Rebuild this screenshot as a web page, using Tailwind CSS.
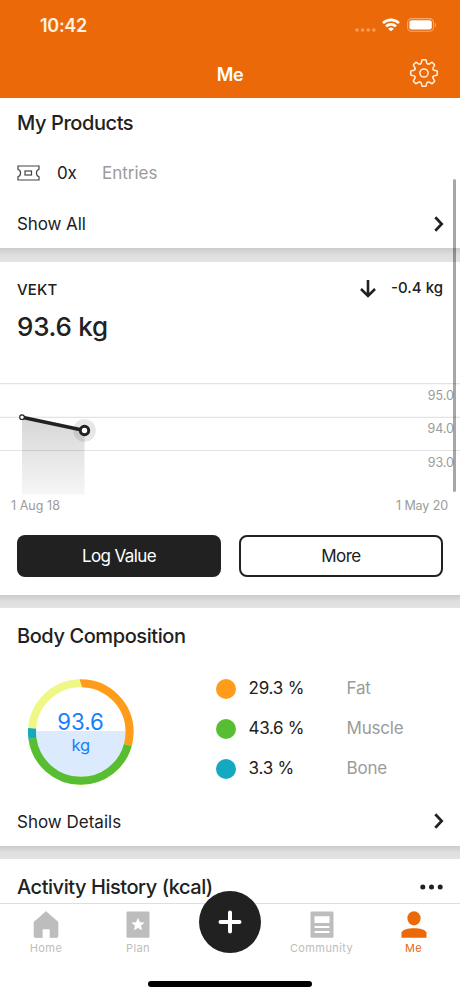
<!DOCTYPE html>
<html lang="en">
<head>
<meta charset="utf-8">
<title>Me</title>
<script src="https://cdn.jsdelivr.net/npm/@tailwindcss/browser@4"></script>
</head>
<body class="bg-white">
<div class="relative w-[460px] h-[996px] overflow-hidden bg-[#e3e3e3] text-[#212121] font-['Inter','Liberation_Sans',sans-serif] whitespace-nowrap flex flex-col">

  <header class="h-[98px] shrink-0 bg-[#ec6909] text-white">
    <div class="h-[50px] pl-[40px] pr-[23px] flex items-center justify-between">
      <span class="text-[18px] leading-[22px] font-semibold tracking-[-0.3px] text-[#fff3e0] pt-[2px]">10:42</span>
      <div class="flex items-center">
        <svg width="21" height="4" viewBox="0 0 21 4" class="mt-[10px] mr-[6px]" fill="#f69c59"><circle cx="2" cy="2" r="1.8"/><circle cx="7.6" cy="2" r="1.8"/><circle cx="13.2" cy="2" r="1.8"/><circle cx="18.8" cy="2" r="1.8"/></svg>
        <svg width="18" height="14" viewBox="0 0 18 14" class="mr-[7px]" fill="none" stroke="#fff" stroke-width="2.6"><path d="M1 5.1A11.6 11.6 0 0 1 17 5.1"/><path d="M4 8.4A7.3 7.3 0 0 1 14 8.4"/><path d="M9 13.2L6.1 10.7A4.3 4.3 0 0 1 11.9 10.7Z" fill="#fff" stroke="none"/></svg>
        <svg width="30" height="14" viewBox="0 0 30 14"><rect x=".6" y=".6" width="26" height="12.6" rx="4" fill="none" stroke="#f7a96f" stroke-width="1.1"/><rect x="2.4" y="2.3" width="22.4" height="9.2" rx="2.3" fill="#fff"/><path d="M28 4.7C29.5 5.4 29.5 8.5 28 9.2Z" fill="#f7a96f"/></svg>
      </div>
    </div>
    <div class="h-[48px] grid grid-cols-3 items-center">
      <span></span>
      <h1 class="text-center text-[18px] leading-[22px] font-semibold tracking-[-0.4px] pt-px">Me</h1>
      <svg class="justify-self-end mr-[21px] -mt-[2px]" width="30" height="30" viewBox="-15 -15 30 30" fill="none" stroke="#fff0dc" stroke-width="1.5" stroke-linejoin="round" stroke-linecap="round">
        <defs><path id="tooth" d="M-3.4-9.3C-2.6-9.7-2.5-10.3-2.4-11.2L-2.2-12.6Q-2.1-13.3-1.4-13.3H1.4Q2.1-13.3 2.2-12.6L2.4-11.2C2.5-10.3 2.6-9.7 3.4-9.3Q3.8-8.8 4.17-8.98"/></defs>
        <circle r="4.1"/>
        <use href="#tooth"/><use href="#tooth" transform="rotate(45)"/><use href="#tooth" transform="rotate(90)"/><use href="#tooth" transform="rotate(135)"/><use href="#tooth" transform="rotate(180)"/><use href="#tooth" transform="rotate(225)"/><use href="#tooth" transform="rotate(270)"/><use href="#tooth" transform="rotate(315)"/>
      </svg>
    </div>
  </header>

  <main class="h-[805px] shrink-0 overflow-hidden">
    <section class="h-[150px] bg-white px-[17px] flex flex-col">
      <h2 class="h-[50px] leading-[51px] text-[20px] font-medium tracking-[-0.42px]">My Products</h2>
      <div class="h-[50px] flex items-center text-[17px]">
        <svg width="23" height="16" viewBox="0 0 23 16" class="-mt-px" fill="none" stroke="#444" stroke-width="1.2"><path d="M1 1H22V4.2C18.6 5.3 18.6 10.7 22 11.8V15H1V11.8C4.4 10.7 4.4 5.3 1 4.2Z"/><rect x="8" y="6" width="6.5" height="4"/></svg>
        <span class="ml-[17px] w-[45px] pt-[2px] tracking-[-0.2px]">0x</span>
        <span class="text-[#9b9b9b] pt-[2px]">Entries</span>
      </div>
      <div class="h-[50px] flex items-center justify-between text-[17px]">
        <span class="pt-[3px] tracking-[-0.1px]">Show All</span>
        <svg width="10" height="16" viewBox="0 0 10 16" fill="none" stroke="#212121" stroke-width="2.7" class="mr-[-1px] mt-px"><path d="M1.3 1.2L7.7 8L1.3 14.8"/></svg>
      </div>
    </section>
    <div class="h-[14px] bg-linear-to-b from-[#cbcbcb] via-[#dfdfdf] via-50% to-[#e3e3e3]"></div>

    <section class="h-[333px] bg-white flex flex-col">
      <div class="h-[54px] px-[17px] flex items-center justify-between font-medium text-[15px]">
        <span class="pt-[3px] tracking-[0.2px]">VEKT</span>
        <div class="flex items-center -mt-[2px]">
          <svg width="16" height="18" viewBox="0 0 16 18" class="mr-[15px] mt-[2px]" fill="none" stroke="#212121" stroke-width="2.6"><path d="M8 0V16M1 9L8 16L15 9"/></svg>
          <span>-0.4 kg</span>
        </div>
      </div>
      <div class="h-[32px] leading-[32px] -mt-[5px] px-[17px] text-[26px] font-[450] tracking-[-0.25px]">93.6 kg</div>
      <div class="mt-[40px] h-[112px] relative">
        <svg width="460" height="112" viewBox="0 383 460 112" class="absolute inset-0">
          <defs><linearGradient id="area" x1="0" y1="0" x2="0" y2="1"><stop offset="0" stop-color="#d6d6d6"/><stop offset="1" stop-color="#f6f6f6"/></linearGradient></defs>
          <path d="M22 417L84.5 430.5V494.5H22Z" fill="url(#area)"/>
          <path d="M0 383.7H460M0 417.3H460M0 450.5H460" stroke="#000" stroke-opacity=".11" stroke-width="1.2"/>
          <circle cx="84.5" cy="430.5" r="11.3" fill="#212121" fill-opacity=".11"/>
          <path d="M22 417.2L84.5 430.5" stroke="#212121" stroke-width="3.6"/>
          <circle cx="22" cy="417.2" r="2.3" fill="#fff" stroke="#212121" stroke-width="1.1"/>
          <circle cx="84.5" cy="430.5" r="4.2" fill="#fff" stroke="#212121" stroke-width="3"/>
        </svg>
        <div class="flex flex-col items-end pr-[6px] pt-[5px] text-[12.5px] leading-[16px] text-[#9b9b9b] gap-[17.4px]"><span>95.0</span><span>94.0</span><span>93.0</span></div>
      </div>
      <div class="h-[22px] pt-px pl-[11px] pr-[12px] flex items-center justify-between text-[12.5px] text-[#9b9b9b]"><span class="tracking-[0.05px]">1 Aug 18</span><span class="tracking-[-0.1px]">1 May 20</span></div>
      <div class="mt-[18px] px-[17px] grid grid-cols-2 gap-[18px] text-[17px]">
        <button class="h-[42px] rounded-[8px] bg-[#212121] text-white pt-[2px] tracking-[-0.6px]">Log Value</button>
        <button class="h-[42px] rounded-[8px] border-2 border-[#212121] bg-white pt-[2px] tracking-[-0.5px]">More</button>
      </div>
    </section>
    <div class="h-[13px] bg-linear-to-b from-[#cbcbcb] via-[#dfdfdf] via-50% to-[#e3e3e3]"></div>

    <section class="h-[238px] bg-white px-[17px] flex flex-col">
      <h2 class="h-[56px] leading-[57px] text-[20px] font-medium tracking-[-0.42px]">Body Composition</h2>
      <div class="h-[132px] flex text-[17px]">
        <svg width="128" height="128" viewBox="-63.8 -68 128 128" fill="none" stroke-width="8">
          <path d="M-46 -1H46A46 46 0 0 1 -46 -1Z" fill="#dceafd"/>
          <g transform="rotate(-90)">
            <circle r="48.8" pathLength="100" stroke="#eff887"/>
            <circle r="48.8" pathLength="100" stroke="#ff9c1c" stroke-dasharray="29.3 70.7"/>
            <circle r="48.8" pathLength="100" stroke="#57be33" stroke-dasharray="43.6 56.4" stroke-dashoffset="-29.3"/>
            <circle r="48.8" pathLength="100" stroke="#14a8c1" stroke-dasharray="3.3 96.7" stroke-dashoffset="-72.9"/>
          </g>
          <g fill="#157efb" text-anchor="middle"><text x="-0.3" y="-2" font-size="22.2">93.6</text><text x="0" y="19" font-size="16.5">kg</text></g>
        </svg>
        <div class="ml-[70.5px] mt-[12.500px] flex flex-col gap-[16px]">
          <div class="h-[24px] flex items-center"><i class="w-[20px] h-[20px] rounded-full bg-[#ff9c1c]"></i><span class="ml-[13px] w-[98px] pt-px tracking-[-0.2px]">29.3 %</span><span class="text-[#9b9b9b] pt-px tracking-[-0.2px]">Fat</span></div>
          <div class="h-[24px] flex items-center"><i class="w-[20px] h-[20px] rounded-full bg-[#57be33]"></i><span class="ml-[13px] w-[98px] pt-px tracking-[-0.35px]">43.6 %</span><span class="text-[#9b9b9b] pt-px tracking-[-0.2px]">Muscle</span></div>
          <div class="h-[24px] flex items-center"><i class="w-[20px] h-[20px] rounded-full bg-[#14a8c1]"></i><span class="ml-[13px] w-[98px] pt-px tracking-[-0.2px]">3.3 %</span><span class="text-[#9b9b9b] pt-px tracking-[-0.2px]">Bone</span></div>
        </div>
      </div>
      <div class="h-[50px] flex items-center justify-between text-[17px]">
        <span class="pt-[3px]">Show Details</span>
        <svg width="10" height="16" viewBox="0 0 10 16" fill="none" stroke="#212121" stroke-width="2.7" class="mr-[-1px]"><path d="M1.3 1.2L7.7 8L1.3 14.8"/></svg>
      </div>
    </section>
    <div class="h-[13px] bg-linear-to-b from-[#cbcbcb] via-[#dfdfdf] via-50% to-[#e3e3e3]"></div>

    <section class="h-[56px] bg-white px-[17px] flex justify-between">
      <h2 class="h-[56px] leading-[57px] text-[20px] font-medium tracking-[-0.45px]">Activity History (kcal)</h2>
      <svg width="23" height="6" viewBox="0 0 23 6" class="mt-[25px]" fill="#212121"><circle cx="2.8" cy="3" r="2.5"/><circle cx="11.5" cy="3" r="2.5"/><circle cx="20.2" cy="3" r="2.5"/></svg>
    </section>
  </main>

  <nav class="relative h-[93px] shrink-0 bg-white border-t border-[#dedede]">
    <div class="grid grid-cols-5 h-[54px] text-[11px] leading-[14px] tracking-[0.4px] text-[#bdbdbd]">
      <div class="flex flex-col items-center pt-[7px] gap-[3px]">
        <svg width="26" height="27" viewBox="0 0 26 27" fill="#bdbdbd"><path d="M13 .5L25 11V25Q25 26.7 23.3 26.7H17V18H9.3V26.7H2.7Q1 26.7 1 25V11Z" stroke="#bdbdbd" stroke-width=".6" stroke-linejoin="round"/></svg>
        <span>Home</span></div>
      <div class="flex flex-col items-center pt-[7px] gap-[3px]">
        <svg width="24" height="27" viewBox="0 0 24 27"><rect x=".5" y=".5" width="23" height="26.3" rx="1.3" fill="#bdbdbd"/><path d="M12 6.8L13.9 11.2L18.6 11.6L15 14.7L16.1 19.3L12 16.9L7.900 19.3L9 14.7L5.4 11.6L10.1 11.2Z" fill="#fff"/></svg>
        <span>Plan</span></div>
      <span></span>
      <div class="flex flex-col items-center pt-[7px] gap-[3px]">
        <svg width="24" height="27" viewBox="0 0 24 27" class="-ml-px"><rect x=".5" y=".5" width="23" height="26.3" rx="1.3" fill="#bdbdbd"/><path d="M4.5 5.3H19.5V12H4.5ZM4.5 15H19.5V17H4.5ZM4.5 20H19.5V22H4.5Z" fill="#fff"/></svg>
        <span class="-ml-px">Community</span></div>
      <div class="flex flex-col items-center pt-[7px] gap-[3px] text-[#ec6909]">
        <svg width="26" height="27" viewBox="0 0 26 27" class="-ml-px" fill="#ec6909"><ellipse cx="13" cy="7.3" rx="6.6" ry="7.1"/><path d="M.5 26.7V21.5C2 18.5 7 17.3 13 17.3S24 18.5 25.5 21.5V26.7Z"/></svg>
        <span class="-ml-px">Me</span></div>
    </div>
    <div class="absolute left-[199px] -top-[13px] w-[62px] h-[62px] rounded-full bg-[#212121] flex items-center justify-center">
      <svg width="24" height="24" viewBox="0 0 24 24" stroke="#fff" stroke-width="4" stroke-linecap="round"><path d="M12 2.5V21.5M2.5 12H21.5"/></svg>
    </div>
    <div class="absolute left-[148px] top-[77px] w-[164px] h-[6px] rounded-full bg-black"></div>
  </nav>

  <div class="absolute left-[453px] top-[179px] w-[3px] h-[313px] rounded-full bg-black/35"></div>
</div>
</body>
</html>
